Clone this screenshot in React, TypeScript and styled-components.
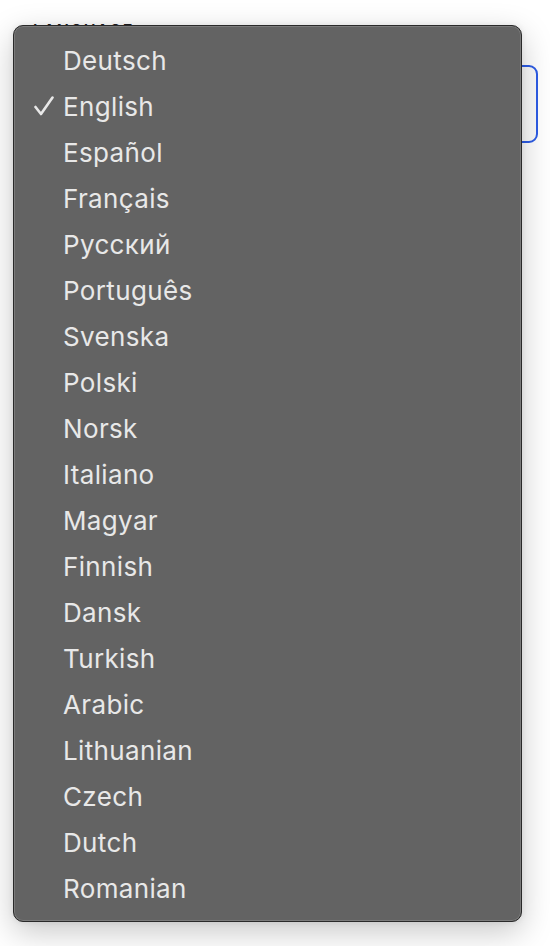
import React from "react";
import styled, { createGlobalStyle } from "styled-components";

const Global = createGlobalStyle`
  html, body { margin: 0; padding: 0; background: #ffffff; }
  body { font-family: Inter, "Noto Sans", "Liberation Sans", sans-serif; }
`;

const Page = styled.div`
  position: relative;
  width: 550px;
  height: 946px;
  box-sizing: border-box;
  padding: 20px 12px 0 33px;
  display: flex;
  flex-direction: column;
  gap: 25px;
  overflow: hidden;
`;

const Label = styled.div`
  font-size: 16px;
  font-weight: 600;
  letter-spacing: 1.5px;
  color: #1d1d1f;
  text-transform: uppercase;
  line-height: 20px;
`;

const SelectBox = styled.div`
  height: 78px;
  box-sizing: border-box;
  border: 2px solid #2d5ce6;
  border-radius: 9px;
  background: #fbfbfb;
  margin-left: -20px;
`;

const Menu = styled.ul`
  position: absolute;
  left: 13px;
  top: 25px;
  width: 509px;
  box-sizing: border-box;
  margin: 0;
  padding: 11px 0 10px;
  list-style: none;
  background: #636363;
  border: 1px solid #2a2a2a;
  border-radius: 10px;
  box-shadow: inset 0 0 0 1px #7b7b7b, 0 10px 32px rgba(0, 0, 0, 0.22),
    0 0 6px rgba(0, 0, 0, 0.08);
`;

const Item = styled.li`
  height: 46px;
  display: grid;
  grid-template-columns: 49px 1fr;
  align-items: center;
  color: #e8e8e8;
  font-size: 26px;
  font-weight: 400;
  letter-spacing: 0.35px;
`;

const Check = styled.svg<{ $on: boolean }>`
  visibility: ${(p) => (p.$on ? "visible" : "hidden")};
  justify-self: end;
  margin-right: 9px;
  width: 20px;
  height: 20px;
`;

const languages = [
  "Deutsch",
  "English",
  "Español",
  "Français",
  "Русский",
  "Português",
  "Svenska",
  "Polski",
  "Norsk",
  "Italiano",
  "Magyar",
  "Finnish",
  "Dansk",
  "Turkish",
  "Arabic",
  "Lithuanian",
  "Czech",
  "Dutch",
  "Romanian",
];

export default function App() {
  return (
    <>
      <Global />
      <Page>
        <Label>Language</Label>
        <SelectBox />
        <Menu>
          {languages.map((l) => (
            <Item key={l}>
              <Check $on={l === "English"} viewBox="0 0 20 20">
                <polyline
                  points="1.5,11 7,18 18.5,1.5"
                  fill="none"
                  stroke="#e8e8e8"
                  strokeWidth="2.6"
                  strokeLinecap="round"
                  strokeLinejoin="round"
                />
              </Check>
              <span>{l}</span>
            </Item>
          ))}
        </Menu>
      </Page>
    </>
  );
}
